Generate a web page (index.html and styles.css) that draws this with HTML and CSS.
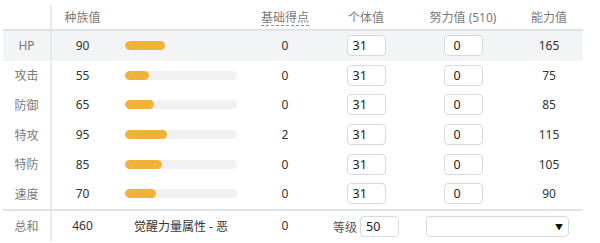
FILE: index.html
```html
<!DOCTYPE html>
<html lang="zh">
<head>
<meta charset="utf-8">
<link rel="stylesheet" href="styles.css">
</head>
<body>
<div class="stats">
  <div class="row head">
    <div class="cell lab"></div>
    <div class="cell">种族值</div>
    <div class="cell"></div>
    <div class="cell"><span class="dotted">基础得点</span></div>
    <div class="cell">个体值</div>
    <div class="cell">努力值 (510)</div>
    <div class="cell">能力值</div>
  </div>
  <div class="row hl">
    <div class="cell lab">HP</div>
    <div class="cell val">90</div>
    <div class="cell bar"><div class="track"><div class="fill" style="width:35.3%"></div></div></div>
    <div class="cell val">0</div>
    <div class="cell"><input class="box" value="31"></div>
    <div class="cell"><input class="box ev" value="0"></div>
    <div class="cell val">165</div>
  </div>
  <div class="row">
    <div class="cell lab">攻击</div>
    <div class="cell val">55</div>
    <div class="cell bar"><div class="track"><div class="fill" style="width:21.6%"></div></div></div>
    <div class="cell val">0</div>
    <div class="cell"><input class="box" value="31"></div>
    <div class="cell"><input class="box ev" value="0"></div>
    <div class="cell val">75</div>
  </div>
  <div class="row">
    <div class="cell lab">防御</div>
    <div class="cell val">65</div>
    <div class="cell bar"><div class="track"><div class="fill" style="width:25.5%"></div></div></div>
    <div class="cell val">0</div>
    <div class="cell"><input class="box" value="31"></div>
    <div class="cell"><input class="box ev" value="0"></div>
    <div class="cell val">85</div>
  </div>
  <div class="row">
    <div class="cell lab">特攻</div>
    <div class="cell val">95</div>
    <div class="cell bar"><div class="track"><div class="fill" style="width:37.3%"></div></div></div>
    <div class="cell val">2</div>
    <div class="cell"><input class="box" value="31"></div>
    <div class="cell"><input class="box ev" value="0"></div>
    <div class="cell val">115</div>
  </div>
  <div class="row">
    <div class="cell lab">特防</div>
    <div class="cell val">85</div>
    <div class="cell bar"><div class="track"><div class="fill" style="width:33.3%"></div></div></div>
    <div class="cell val">0</div>
    <div class="cell"><input class="box" value="31"></div>
    <div class="cell"><input class="box ev" value="0"></div>
    <div class="cell val">105</div>
  </div>
  <div class="row">
    <div class="cell lab">速度</div>
    <div class="cell val">70</div>
    <div class="cell bar"><div class="track"><div class="fill" style="width:27.5%"></div></div></div>
    <div class="cell val">0</div>
    <div class="cell"><input class="box" value="31"></div>
    <div class="cell"><input class="box ev" value="0"></div>
    <div class="cell val">90</div>
  </div>
  <div class="row total">
    <div class="cell lab">总和</div>
    <div class="cell val">460</div>
    <div class="cell val">觉醒力量属性 - 恶</div>
    <div class="cell val">0</div>
    <div class="cell level"><span class="lvl">等级</span><input class="box" value="50"></div>
    <div class="cell nature"><div class="select"><span class="arrow">▼</span></div></div>
  </div>
</div>
</body>
</html>
```

FILE: styles.css
```css
html, body {
  margin: 0;
  padding: 0;
  background: #ffffff;
}
body {
  font-family: "Noto Sans", "Noto Sans CJK SC", sans-serif;
  font-size: 12px;
  color: #333333;
}
.stats {
  margin: 5px 0 0 3px;
  width: 580px;
}
.row {
  display: grid;
  grid-template-columns: 49px 61px 136px 72px 90px 104px 68px;
  height: 29.6px;
}
.row.head {
  height: 24px;
  border-bottom: 2px solid #dfe2e8;
  color: #7a7a7a;
}
.row.hl {
  background: #f3f4f6;
}
.row.hl .track {
  background: #f3f4f6;
}
.row.total {
  grid-template-columns: 49px 61px 136px 72px 90px 172px;
  height: 30px;
  border-top: 2px solid #dfe2e8;
}
.cell {
  display: flex;
  align-items: center;
  justify-content: center;
  white-space: nowrap;
}
.cell.lab {
  border-right: 2px solid #e9ebef;
  color: #7a7a7a;
}
.dotted {
  border-bottom: 1px dashed #8a8a8a;
  line-height: 15px;
  margin-top: 2px;
}
.val {
  color: #333333;
}
.bar {
  padding: 0 12px;
}
.track {
  width: 100%;
  height: 9px;
  border-radius: 5px;
  background: #f1f1f2;
  overflow: hidden;
}
.fill {
  height: 100%;
  border-radius: 5px;
  background: #efb23b;
}
.box {
  box-sizing: border-box;
  width: 39px;
  height: 21px;
  margin: 0;
  padding: 0 5px;
  border: 1px solid #d6d9de;
  border-radius: 4px;
  background: #ffffff;
  font-family: "Noto Sans", sans-serif;
  font-size: 12.5px;
  color: #222222;
  outline: none;
}
.box.ev {
  padding-left: 9px;
}
.level {
  gap: 3px;
  padding-top: 2px;
}
.lvl {
  color: #555555;
}
.nature {
  justify-content: flex-start;
  padding-left: 15px;
  padding-top: 2px;
}
.select {
  box-sizing: border-box;
  width: 143px;
  height: 21px;
  border: 1px solid #d6d9de;
  border-radius: 4px;
  background: #ffffff;
  display: flex;
  align-items: center;
  justify-content: flex-end;
  padding-right: 5px;
}
.arrow {
  font-size: 8px;
  color: #111111;
}
```
